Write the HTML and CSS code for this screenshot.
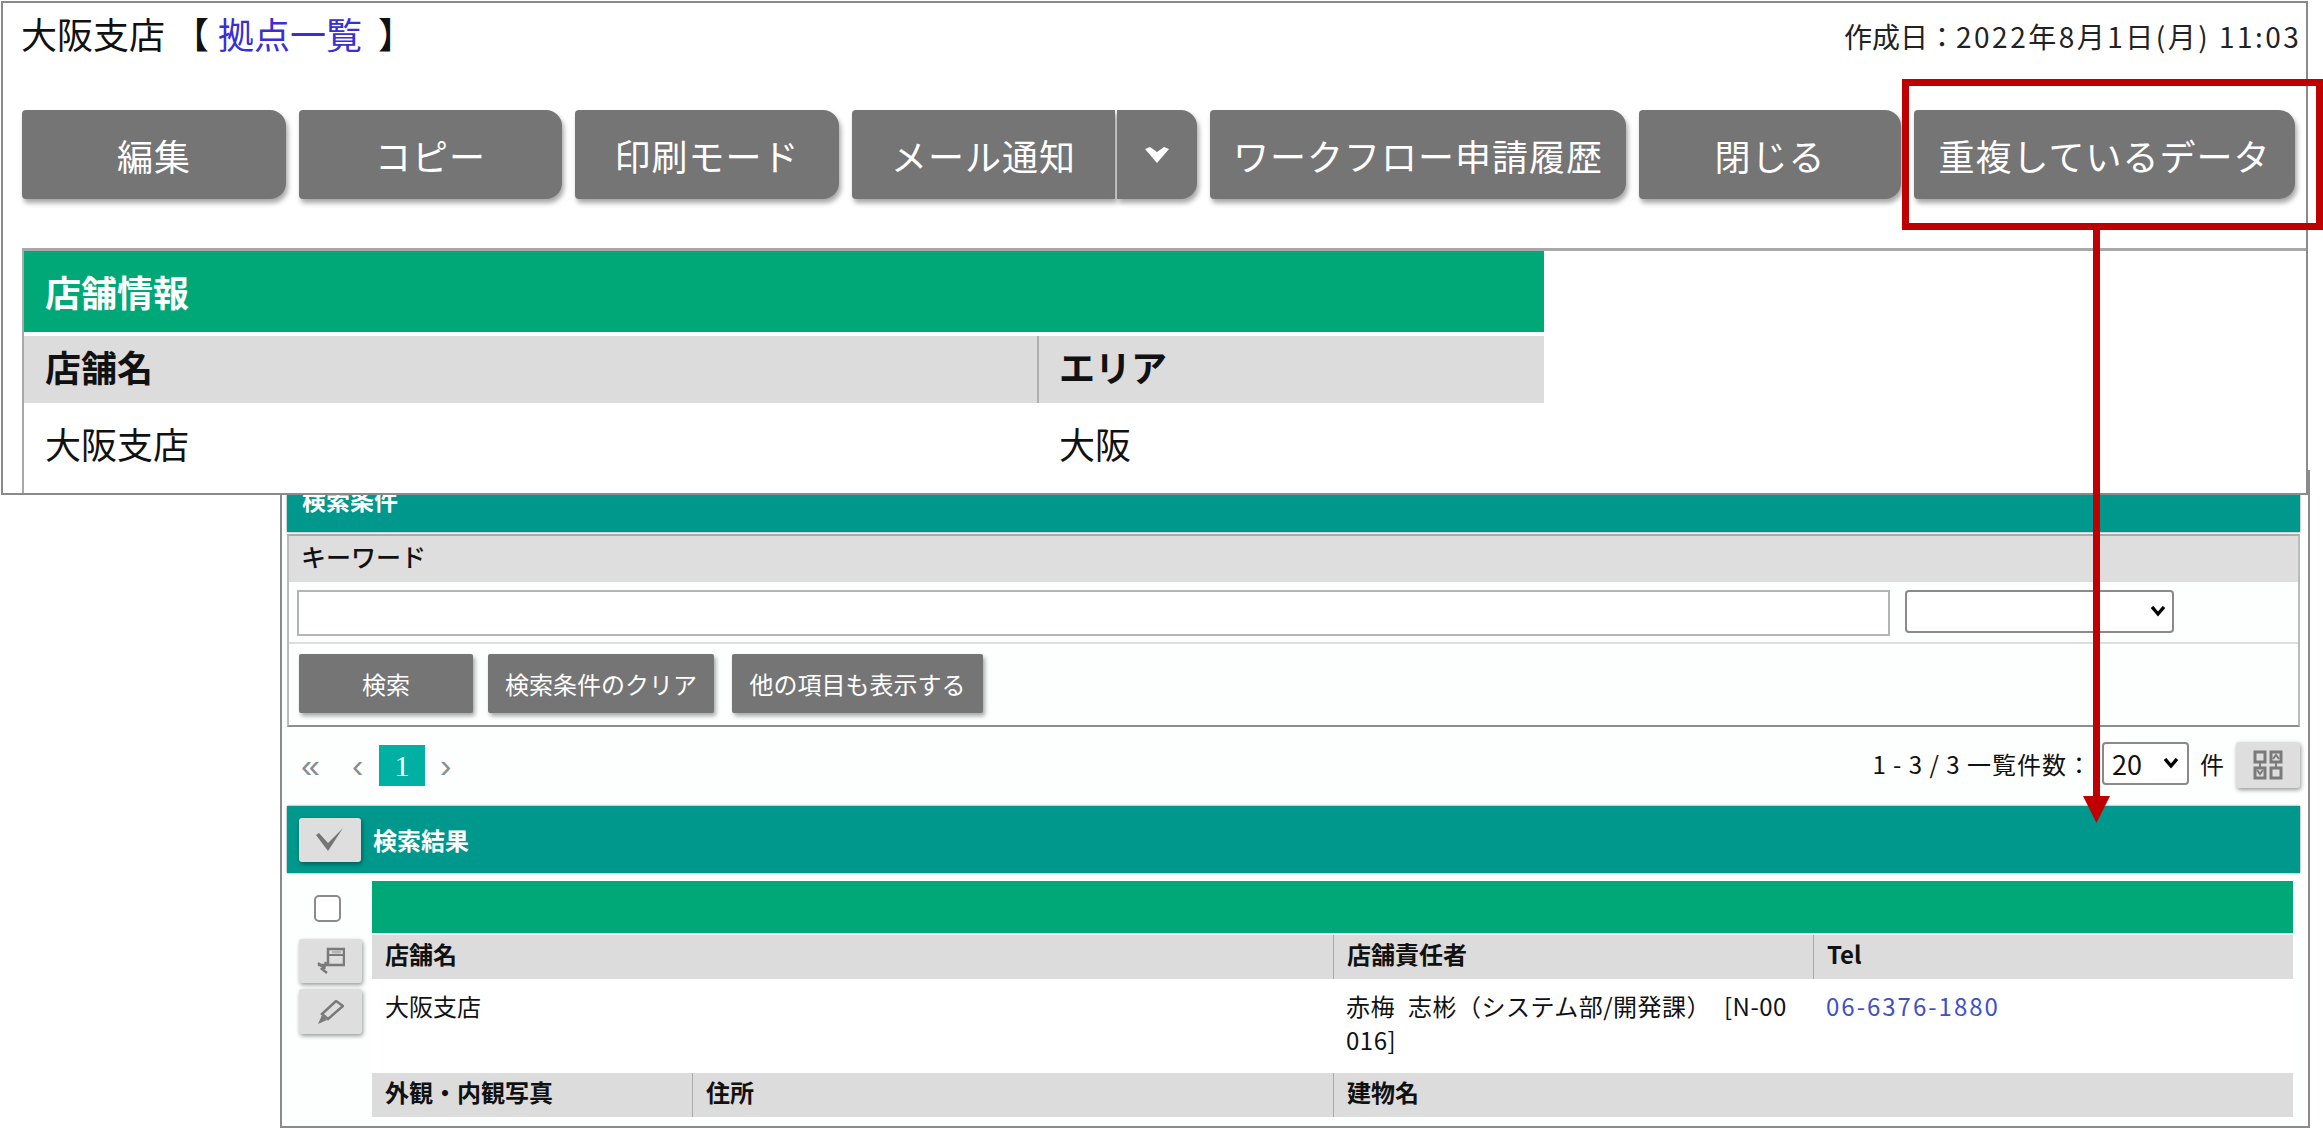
FILE: index.html
```html
<!DOCTYPE html>
<html lang="ja">
<head>
<meta charset="utf-8">
<title>大阪支店</title>
<link rel="stylesheet" href="styles.css">
</head>
<body>
<div class="page">
  <section class="win-back">
    <div class="bar bar-cut"><span>検索条件</span></div>
    <div class="search">
      <div class="search-label">キーワード</div>
      <div class="search-inputs">
        <input class="kw" type="text">
        <select class="kw-select"><option></option></select>
      </div>
      <div class="search-btns">
        <button class="gbtn g1">検索</button>
        <button class="gbtn g2">検索条件のクリア</button>
        <button class="gbtn g3">他の項目も表示する</button>
      </div>
    </div>
    <div class="pager-row">
      <div class="pager">
        <span class="pg pg-first">«</span>
        <span class="pg pg-prev">‹</span>
        <span class="pg-cur">1</span>
        <span class="pg pg-next">›</span>
      </div>
      <div class="count">
        <span class="count-text">1 - 3 / 3 一覧件数：</span>
        <select class="count-select"><option>20</option></select>
        <span class="count-unit">件</span>
        <button class="ibtn ibtn-grid" aria-label="表示切替">
          <svg width="30" height="30" viewBox="0 0 30 30" fill="none" stroke="#7a7a7a" stroke-width="3">
            <rect x="2" y="2" width="10" height="10"/><rect x="18" y="2" width="10" height="10"/>
            <rect x="2" y="18" width="10" height="10"/><rect x="18" y="18" width="10" height="10"/>
            <path d="M7 12v6M23 12v6" stroke-width="2"/>
            <path d="M20 9l3-4 3 4M4 20l3 4 3-4" stroke-width="2"/>
          </svg>
        </button>
      </div>
    </div>
    <div class="bar bar-results">
      <button class="ibtn ibtn-check" aria-label="全選択">
        <svg width="28" height="23" viewBox="0 0 28 23"><path d="M0 7l3-2 9 10L27 0 12 23z" fill="#757575"/></svg>
      </button>
      <span>検索結果</span>
    </div>
    <div class="results">
      <div class="row-tools">
        <input class="chk" type="checkbox">
        <button class="ibtn ibtn-row" aria-label="展開">
          <svg width="28" height="28" viewBox="0 0 28 28" fill="none" stroke="#7a7a7a" stroke-width="2.5">
            <path d="M11 18V2h16v16H11"/><path d="M11 8h16" stroke-width="2"/><path d="M15 5h9" stroke-width="3" stroke="#b5b5b5"/>
            <path d="M11 18H1"/><path d="M1 16l6 5-2 1 5 4M9 15l-2 6" stroke-width="2.5"/>
          </svg>
        </button>
        <button class="ibtn ibtn-row ibtn-edit" aria-label="編集">
          <svg width="26" height="24" viewBox="0 0 26 24"><path d="M18 1l7 5L10 19l-6-5z" fill="none" stroke="#7a7a7a" stroke-width="2.5"/><path d="M4 15l5 5-9 4z" fill="#7a7a7a"/></svg>
        </button>
      </div>
      <div class="table">
        <div class="t-band"></div>
        <div class="th th-first span2">店舗名</div>
        <div class="th">店舗責任者</div>
        <div class="th">Tel</div>
        <div class="td span2">大阪支店</div>
        <div class="td td-break">赤梅 志彬（システム部/開発課） [N-00016]</div>
        <div class="td"><a class="tel" href="#">06-6376-1880</a></div>
        <div class="th th-first">外観・内観写真</div>
        <div class="th">住所</div>
        <div class="th span2">建物名</div>
      </div>
    </div>
  </section>

  <section class="win-front">
    <div class="title-row">
      <div class="title">大阪支店 【<a class="link" href="#">拠点一覧</a>】</div>
      <div class="date">作成日：<span class="date-value">2022年8月1日(月) 11:03</span></div>
    </div>
    <div class="actions">
      <button class="abtn a-edit">編集</button>
      <button class="abtn a-copy">コピー</button>
      <button class="abtn a-print">印刷モード</button>
      <div class="split">
        <button class="abtn a-mail">メール通知</button>
        <button class="abtn a-caret" aria-label="メニュー">
          <svg width="24" height="16" viewBox="0 0 24 16"><path d="M0 2l5-2 7 5 7-5 5 2-12 14z" fill="#fff"/></svg>
        </button>
      </div>
      <button class="abtn a-flow">ワークフロー申請履歴</button>
      <button class="abtn a-close">閉じる</button>
      <button class="abtn a-dup">重複しているデータ</button>
    </div>
    <div class="info">
      <div class="info-head">店舗情報</div>
      <div class="info-grid">
        <div class="info-th">店舗名</div>
        <div class="info-th">エリア</div>
        <div class="info-td">大阪支店</div>
        <div class="info-td">大阪</div>
      </div>
    </div>
  </section>

  <div class="mark-box"></div>
  <svg class="mark-arrow" width="27" height="594" viewBox="0 0 27 594">
    <rect x="10" y="0" width="7" height="570" fill="#c00000"/>
    <path d="M0 566h27l-13.5 27z" fill="#c00000"/>
  </svg>
</div>
</body>
</html>
```

FILE: styles.css
```css
* { box-sizing: border-box; }
html, body { margin: 0; padding: 0; background: #fff; }
body { font-family: "Noto Sans CJK JP", "Liberation Sans", sans-serif; color: #111; overflow: hidden; }
button, input, select { font-family: inherit; margin: 0; }
a { text-decoration: none; }

.page { position: relative; width: 2323px; height: 1129px; overflow: hidden; padding: 470px 0 0 280px; }

/* back window */
.win-back { width: 2030px; height: 658px; background: #fdfefe; border: 2px solid #8a8a8a; border-top: 0; padding: 0 8px 0 5px; }
.bar { background: #00978c; color: #fff; font-weight: 700; font-size: 24px; display: flex; align-items: center; box-shadow: 0 0 2px #777; }
.bar-cut { height: 62px; padding: 0 0 4px 15px; }
.bar-results { height: 67px; padding-left: 12px; gap: 12px; }

.search { margin-top: 2px; height: 193px; border: 2px solid #bbb; border-bottom-color: #8e8e8e; border-top-color: #aaa; background: #fdfefe; }
.search-label { height: 46px; background: #dedede; font-size: 25px; font-weight: 500; padding-left: 12px; line-height: 40px; }
.search-inputs { height: 62px; display: flex; align-items: flex-start; gap: 15px; padding: 8px 0 0 8px; border-bottom: 2px solid #ddd; }
.kw { width: 1593px; height: 46px; border: 2px solid #b4b4b4; background: #fff; }
.kw-select, .count-select {
  appearance: none; border: 2px solid #8a8a8a; border-radius: 4px; height: 43px;
  background: #fff url("data:image/svg+xml,%3Csvg xmlns='http://www.w3.org/2000/svg' width='16' height='11'%3E%3Cpath d='M2 1l6 7 6-7' fill='none' stroke='%23000' stroke-width='3.4'/%3E%3C/svg%3E") no-repeat;
}
.kw-select { width: 269px; font-size: 24px; background-position: right 6px center; }
.search-btns { display: flex; gap: 15px; padding: 10px 0 0 10px; }
.gbtn { height: 59px; border: 0; padding: 0; background: #757575; color: #fff; font-size: 24px; white-space: nowrap; box-shadow: 2px 3px 4px rgba(0,0,0,.35); border-radius: 2px; }
.g1 { width: 174px; }
.g2 { width: 226px; }
.g3 { width: 251px; margin-left: 3px; }

.pager-row { height: 79px; display: flex; justify-content: space-between; align-items: flex-start; padding-top: 18px; }
.pager { display: flex; align-items: center; height: 41px; padding-left: 14px; font-size: 34px; color: #8c8c8c; font-family: "Liberation Sans", sans-serif; }
.pg { line-height: 41px; }
.pg-first { width: 51px; }
.pg-prev { width: 27px; }
.pg-cur { width: 46px; height: 41px; background: #00b0a2; color: #fff; font-family: "Liberation Serif", serif; font-size: 30px; line-height: 41px; text-align: center; }
.pg-next { margin-left: 15px; }
.count { display: flex; align-items: flex-start; margin-top: -3px; }
.count-text { font-size: 24px; line-height: 44px; white-space: nowrap; margin-right: 10px; letter-spacing: 1px; }
.count-select { width: 87px; font-size: 27px; padding-left: 8px; background-position: right 8px center; color: #111; font-family: "Noto Sans CJK JP", sans-serif; }
.count-unit { font-size: 24px; line-height: 44px; margin: 0 12px 0 11px; }
.ibtn { display: flex; align-items: center; justify-content: center; padding: 0; border: 0; background: #dedede; border-radius: 3px; box-shadow: 1px 2px 4px rgba(0,0,0,.4); }
.ibtn-grid { width: 64px; height: 46px; }
.ibtn-check { width: 62px; height: 44px; }

.results { display: flex; padding-top: 8px; }
.row-tools { width: 85px; padding-left: 12px; display: flex; flex-direction: column; align-items: flex-start; }
.chk { appearance: none; width: 27px; height: 27px; margin: 14px 0 17px 15px; border: 2px solid #8a8a8a; border-radius: 5px; background: #fff; }
.ibtn-row { width: 63px; height: 44px; }
.ibtn-edit { margin-top: 6px; height: 45px; }
.table { width: 1921px; display: grid; grid-template-columns: 320px 641px 480px 480px; grid-template-rows: 54px 44px 94px 44px; }
.t-band { grid-column: 1 / -1; background: #00a878; margin-bottom: 2px; box-shadow: 0 1px 0 #d8f0e8; }
.th { background: #dcdcdc; font-size: 24px; font-weight: 700; padding-left: 13px; line-height: 38px; border-left: 1px solid #aaa; white-space: nowrap; }
.th-first { border-left: 0; }
.span2 { grid-column: span 2; }
.td { font-size: 24px; line-height: 34px; padding: 10px 8px 0 13px; background: #fff; }
.td-break { word-break: break-all; word-spacing: 7px; letter-spacing: .5px; padding-right: 24px; }
.tel { color: #3f50c8; letter-spacing: 2px; }

/* front window */
.win-front { position: absolute; left: 1px; top: 1px; width: 2307px; height: 494px; background: #fff; border: 2px solid #8a8a8a; overflow: hidden; }
.title-row { display: flex; height: 107px; padding-left: 18px; align-items: flex-start; }
.title { flex: 0 0 1823px; font-size: 36px; line-height: 60px; white-space: nowrap; }
.link { color: #3a2fd0; margin: 0 16px 0 9px; }
.date { flex: none; font-size: 28px; line-height: 66px; white-space: nowrap; color: #222; }
.date-value { letter-spacing: 2.5px; }
.actions { display: flex; gap: 13px; padding-left: 19px; height: 89px; }
.split { display: flex; gap: 2px; }
.abtn { height: 89px; padding: 0; border: 0; background: #757575; color: #fff; font-size: 36px; letter-spacing: 1px; white-space: nowrap; display: flex; align-items: center; justify-content: center; border-radius: 4px 16px 16px 4px; box-shadow: 2px 4px 5px rgba(0,0,0,.35); }
.a-edit { width: 264px; }
.a-copy { width: 263px; }
.a-print { width: 264px; }
.a-mail { width: 263px; border-radius: 4px 0 0 4px; }
.a-caret { width: 80px; border-radius: 0 16px 16px 0; }
.a-flow { width: 416px; }
.a-close { width: 262px; }
.a-dup { width: 381px; }
.info { margin: 49px 0 0 19px; border-top: 3px solid #a8a8a8; border-left: 2px solid #a8a8a8; height: 260px; }
.info-head { width: 1520px; height: 81px; background: #00a878; color: #fff; font-size: 36px; font-weight: 700; line-height: 80px; padding-left: 21px; }
.info-grid { width: 1520px; margin-top: 4px; display: grid; grid-template-columns: 1015px 505px; grid-template-rows: 67px 90px; }
.info-th { background: #dcdcdc; font-size: 36px; font-weight: 700; line-height: 60px; padding-left: 20px; }
.info-th:first-child { padding-left: 21px; border-right: 2px solid #b0b0b0; }
.info-td { font-size: 36px; line-height: 80px; padding-left: 20px; }
.info-td:nth-child(3) { padding-left: 21px; }

/* annotation */
.mark-box { position: absolute; left: 1902px; top: 79px; width: 421px; height: 151px; border: 7px solid #c00000; }
.mark-arrow { position: absolute; left: 2083px; top: 230px; }
```
